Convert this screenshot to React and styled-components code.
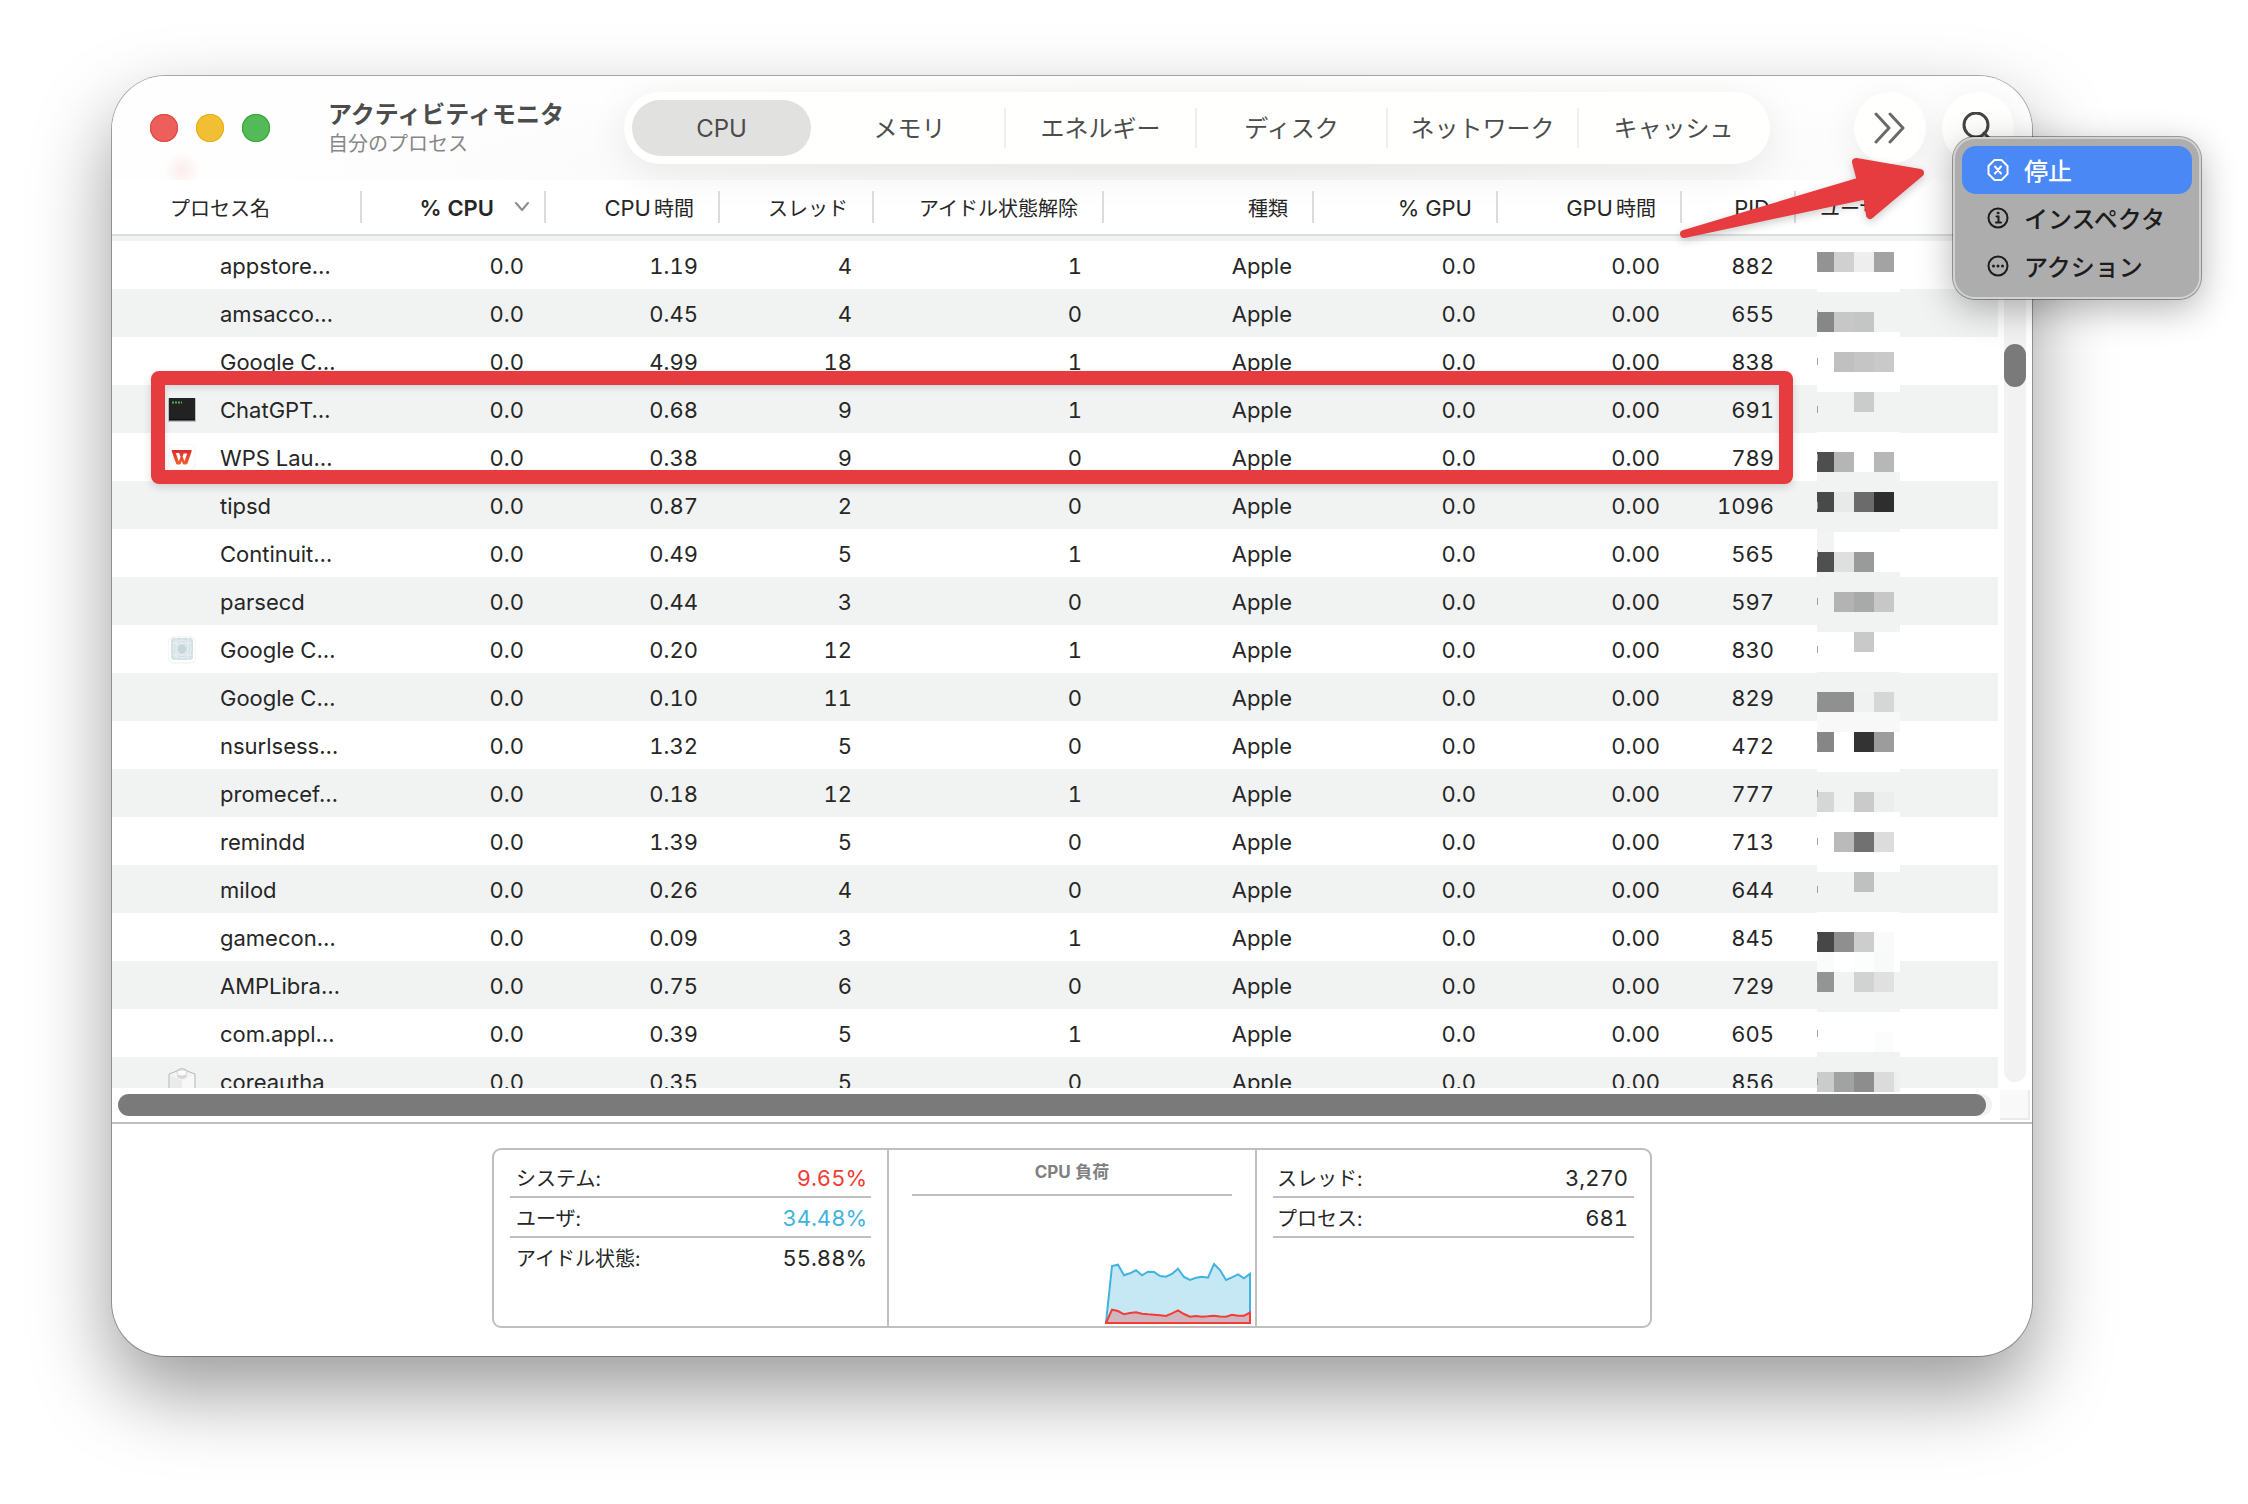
import styled, { createGlobalStyle } from 'styled-components';

const GlobalStyle = createGlobalStyle`
  * {
    box-sizing: border-box;
  }

  body {
    margin: 0;
    background: #ffffff;
    color: #262626;
    font-family: Inter, 'Noto Sans CJK JP', sans-serif;
    font-variant-numeric: tabular-nums;
  }

  button {
    font-family: inherit;
    color: inherit;
    border: none;
    background: none;
    padding: 0;
    cursor: pointer;
  }
`;

const Page = styled.div`
  padding: 76px 216px 148px 112px;
  overflow: hidden;
`;

const Window = styled.main`
  position: relative;
  border-radius: 54px;
  background: #ffffff;
  box-shadow: 0 0 0 1px rgba(0, 0, 0, 0.3), 0 36px 80px rgba(0, 0, 0, 0.4);
`;

const Toolbar = styled.header`
  display: flex;
  align-items: center;
  height: 104px;
  padding: 0 18px 0 38px;
`;

const TopArea = styled.div`
  border-radius: 54px 54px 0 0;
  background:
    radial-gradient(circle at 70px 94px, #fdecec, transparent 18px),
    radial-gradient(ellipse 900px 90px at 56% 90px, #f6f6f6, transparent),
    #fefefe;
`;

const Lights = styled.div`
  display: flex;
  gap: 18px;
  width: 178px;
`;

const Light = styled.button`
  width: 28px;
  height: 28px;
  border-radius: 50%;
  background: ${(props) => props.$color};
  box-shadow: inset 0 0 0 1px ${(props) => props.$edge};
`;

const Titles = styled.div`
  width: 296px;
  padding-top: 2px;
  white-space: nowrap;
`;

const Title = styled.h1`
  margin: 0;
  font-size: 24px;
  line-height: 30px;
  font-weight: 700;
  color: #4c4c4c;
`;

const Subtitle = styled.p`
  margin: 0;
  font-size: 20px;
  line-height: 28px;
  color: #878787;
`;

const Tabs = styled.nav`
  display: flex;
  align-items: center;
  flex: 0 1 1146px;
  height: 72px;
  border-radius: 36px;
  background: #fffffe;
  box-shadow: 0 8px 40px rgba(0, 0, 0, 0.08);
`;

const TabSlot = styled.div`
  flex: 0 0 calc(100% / 6);
  height: ${(props) => (props.$active ? '56px' : '40px')};
  padding: ${(props) => (props.$active ? '0 2px 0 8px' : '0')};
  border-right: 2px solid ${(props) => (props.$divider ? '#efefef' : 'transparent')};
`;

const Tab = styled.button`
  width: 100%;
  height: 100%;
  padding-top: 2px;
  border-radius: 28px;
  font-size: 24px;
  line-height: 32px;
  color: #4c4c4c;
  background: ${(props) => (props.$active ? '#e1e1e0' : 'transparent')};
`;

const ToolbarButtons = styled.div`
  display: flex;
  gap: 16px;
  margin-left: auto;
`;

const RoundButton = styled.button`
  display: flex;
  align-items: center;
  justify-content: center;
  width: 72px;
  height: 72px;
  border-radius: 50%;
  background: #fffffe;
  box-shadow: 0 8px 36px rgba(0, 0, 0, 0.07);
`;

const TableArea = styled.section`
  display: grid;
  grid-template-columns: 1fr 34px;
  position: relative;
`;

const TableClip = styled.div`
  height: 908px;
  overflow: hidden;
`;

const Table = styled.table`
  width: 100%;
  table-layout: fixed;
  border-collapse: separate;
  border-spacing: 0;
`;

const HeadCell = styled.th`
  height: 56px;
  padding: 0;
  border-bottom: 2px solid #dcdcdc;
  font-size: 20px;
  font-weight: ${(props) => (props.$sorted ? 600 : 400)};
  white-space: nowrap;
`;

const HeadLabel = styled.div`
  display: flex;
  align-items: center;
  justify-content: ${(props) => (props.$left ? 'flex-start' : 'flex-end')};
  height: 32px;
  padding: 0 ${(props) => (props.$sorted ? '14px' : '24px')} 0 ${(props) => props.$left || 0}px;
  border-right: 2px solid ${(props) => (props.$last ? 'transparent' : '#dcdcdc')};
  color: #262626;
`;

const Latin = styled.span`
  margin-right: ${(props) => (props.$gap ? '3px' : '0')};
  padding-top: 2px;
  font-size: 22px;
`;

const SortArrow = styled.svg`
  margin-left: 20px;
`;

const Row = styled.tr`
  background: ${(props) => (props.$striped ? '#f1f3f2' : '#ffffff')};
`;

const Sliver = styled.td`
  height: 5px;
  padding: 0;
`;

const Cell = styled.td`
  height: 48px;
  padding: 2px 22px 0 0;
  text-align: right;
  font-size: 22px;
  line-height: 28px;
  white-space: nowrap;
`;

const NameCell = styled(Cell)`
  padding: 2px 0 0 56px;
`;

const NameBox = styled.div`
  display: flex;
  align-items: center;
  gap: 24px;
`;

const IconSlot = styled.span`
  display: flex;
  width: 28px;
  height: 28px;
`;

const ScrollColumn = styled.div`
  display: flex;
  flex-direction: column;
  height: 908px;
`;

const ScrollHead = styled.div`
  height: 56px;
  border-bottom: 2px solid #dcdcdc;
`;

const VerticalTrack = styled.div`
  flex: 1;
  width: 22px;
  margin: 6px 6px;
  padding-top: 102px;
  border-radius: 11px;
  background: #f2f2f2;
`;

const VerticalThumb = styled.div`
  height: 43px;
  border-radius: 11px;
  background: #7a7a7a;
`;

const BottomScroll = styled.div`
  display: flex;
  justify-content: space-between;
  align-items: center;
  height: 36px;
  padding: 0 2px 0 6px;
  border-bottom: 2px solid #bfbfbf;
`;

const HorizontalTrack = styled.div`
  flex: 1;
  height: 22px;
  margin-right: 8px;
  padding-right: 6px;
  border-radius: 11px;
  background: #f2f2f2;
`;

const HorizontalThumb = styled.div`
  height: 22px;
  border-radius: 11px;
  background: #7a7a7a;
`;

const Corner = styled.div`
  width: 30px;
  height: 30px;
  border-right: 2px solid #ebebeb;
  border-bottom: 2px solid #ebebeb;
  background: #f9f9f9;
`;

const Footer = styled.footer`
  display: flex;
  justify-content: center;
  padding: 24px 0 28px;
`;

const Stats = styled.div`
  display: grid;
  grid-template-columns: 1fr 370px 1fr;
  height: 180px;
  border: 2px solid #bfbfbf;
  border-radius: 9px;
  width: 1160px;
`;

const StatList = styled.dl`
  margin: 0;
  padding: 8px 16px;
`;

const StatRow = styled.div`
  display: flex;
  justify-content: space-between;
  align-items: center;
  height: 40px;
  padding: ${(props) => props.$inset};
  border-bottom: 2px solid ${(props) => (props.$rule ? '#bfbfbf' : 'transparent')};
`;

const StatLabel = styled.dt`
  font-size: 20px;
`;

const StatValue = styled.dd`
  margin: 0;
  padding-top: 2px;
  font-size: 22px;
  color: ${(props) => props.$color || '#262626'};
`;

const LoadPanel = styled.div`
  display: flex;
  flex-direction: column;
  justify-content: space-between;
  border-left: 2px solid #bfbfbf;
  border-right: 2px solid #bfbfbf;
`;

const LoadTitle = styled.h2`
  height: 46px;
  margin: 0 23px;
  border-bottom: 2px solid #bfbfbf;
  font-size: 17px;
  line-height: 44px;
  font-weight: 700;
  text-align: center;
  color: #808080;
`;

const LoadChart = styled.svg`
  align-self: flex-end;
  margin: 0 4px 2px 0;
`;

const Mosaic = styled.svg`
  position: absolute;
  left: 1705px;
  top: 72px;
`;

const Highlight = styled.div`
  position: absolute;
  left: 39px;
  top: 191px;
  width: 1642px;
  height: 113px;
  border: 14px solid #e63c40;
  border-radius: 8px;
  box-shadow: 0 3px 8px rgba(0, 0, 0, 0.15), inset 0 3px 6px rgba(0, 0, 0, 0.12);
`;

const Arrow = styled.svg`
  position: absolute;
  right: 100px;
  top: 70px;
  filter: drop-shadow(0 3px 4px rgba(0, 0, 0, 0.2));
`;

const Menu = styled.div`
  position: absolute;
  right: -169px;
  top: 61px;
  width: 248px;
  padding: 9px;
  border-radius: 22px;
  background: #adadad;
  box-shadow:
    inset 0 0 0 2px #d2d2d2,
    0 0 0 1px rgba(0, 0, 0, 0.35),
    0 10px 36px rgba(0, 0, 0, 0.3);
`;

const MenuItem = styled.button`
  display: flex;
  align-items: center;
  gap: 14px;
  width: 100%;
  height: 48px;
  padding: 0 0 0 24px;
  border-radius: 14px;
  font-size: 24px;
  font-weight: 500;
  white-space: nowrap;
  color: ${(props) => (props.$active ? '#ffffff' : '#1c1c1c')};
  background: ${(props) => (props.$active ? '#4a88f6' : 'transparent')};
`;

const MenuLabel = styled.span`
  padding-bottom: 2px;
`;

const tabs = ['CPU', 'メモリ', 'エネルギー', 'ディスク', 'ネットワーク', 'キャッシュ'];

const columns = [
  { label: 'プロセス名', width: 250, left: 58 },
  { latin: '% CPU', width: 184, sorted: true },
  { latin: 'CPU', label: '時間', width: 174 },
  { label: 'スレッド', width: 154 },
  { label: 'アイドル状態解除', width: 230 },
  { label: '種類', width: 210 },
  { latin: '% GPU', width: 184 },
  { latin: 'GPU', label: '時間', width: 184 },
  { latin: 'PID', width: 114 },
  { label: 'ユーザ', left: 24 },
];

const processes = [
  ['appstore…', '1.19', 4, 1, 882],
  ['amsacco…', '0.45', 4, 0, 655],
  ['Google C…', '4.99', 18, 1, 838],
  ['ChatGPT…', '0.68', 9, 1, 691, 'terminal'],
  ['WPS Lau…', '0.38', 9, 0, 789, 'wps'],
  ['tipsd', '0.87', 2, 0, 1096],
  ['Continuit…', '0.49', 5, 1, 565],
  ['parsecd', '0.44', 3, 0, 597],
  ['Google C…', '0.20', 12, 1, 830, 'generic'],
  ['Google C…', '0.10', 11, 0, 829],
  ['nsurlsess…', '1.32', 5, 0, 472],
  ['promecef…', '0.18', 12, 1, 777],
  ['remindd', '1.39', 5, 0, 713],
  ['milod', '0.26', 4, 0, 644],
  ['gamecon…', '0.09', 3, 1, 845],
  ['AMPLibra…', '0.75', 6, 0, 729],
  ['com.appl…', '0.39', 5, 1, 605],
  ['coreautha', '0.35', 5, 0, 856, 'brick'],
];

// w and g are the two row backgrounds
const w = '#ffffff';
const g = '#f1f3f2';
const mosaicColumns = [[0, 17], [17, 20], [37, 20], [57, 20], [77, 6]];
const mosaicRows = [
  ['#939393', '#d0d0d0', '#eeeeee', '#a3a3a3', w],
  [w, w, w, w, w],
  [g, g, g, g, g],
  ['#878787', '#c7c7c7', '#c4c6c5', g, g],
  [w, w, w, w, w],
  [w, '#c0c0c0', '#c5c5c5', '#c9c9c9', w],
  [w, w, w, w, w],
  [g, g, '#cacccb', g, g],
  [g, g, g, g, g],
  [w, w, w, w, w],
  ['#4e4e4e', '#b5b5b5', w, '#b7b7b7', w],
  [g, g, g, g, g],
  ['#494949', '#e8eae9', '#6b6b6b', '#2e2e2e', g],
  [g, g, g, g, g],
  ['#f3f3f3', w, w, w, w],
  ['#4f4f4f', '#dfdfdf', '#9a9a9a', w, w],
  [g, g, g, g, g],
  [g, '#b3b3b3', '#a8aaa9', '#c6c7c6', g],
  [g, g, g, g, g],
  [w, w, '#c9c9c9', w, w],
  [w, w, w, w, w],
  [g, g, g, g, g],
  ['#909090', '#909090', '#f0f2f1', '#d5d7d6', g],
  ['#f8f8f8', '#f8f8f8', '#f8f8f8', '#f8f8f8', '#f8f8f8'],
  ['#868686', w, '#333333', '#9c9c9c', w],
  [w, w, w, w, w],
  [g, g, g, g, g],
  ['#d5d7d6', g, '#cacaca', '#eceded', g],
  [w, w, w, w, w],
  [w, '#bababa', '#717171', '#dcdcdc', w],
  [w, w, w, w, w],
  [g, g, '#bfc1c0', g, g],
  [g, g, g, g, g],
  [w, w, w, w, w],
  ['#474747', '#8f8f8f', '#cdcdcd', '#fafafa', w],
  ['#f9fcfb', w, '#fcfefd', '#f8faf9', w],
  ['#949494', g, '#d1d3d2', '#dfe0df', g],
  [g, g, g, g, g],
  [w, w, w, w, w],
  [w, w, w, '#fcfcfc', w],
  [g, g, g, g, g],
  ['#cacccb', '#a1a3a2', '#8d8d8d', '#dadbda', '#eef0ef'],
];

const userLoad =
  '1,60.5 7,4 13,2.7 19,13.3 25,11.3 31,8.3 37,13.3 43,9.7 49,10 55,14 61,14.7 67,12 73,6.7 79,15 85,18 91,15.7 97,14.7 103,15.7 109,2 115,8 121,18 127,15.3 133,12.3 139,16.3 145,11.7 145,61';
const systemLoad =
  '1,61 7,47.7 13,49 19,52.3 25,51 31,50.3 37,51.7 43,52.3 49,52.7 55,53.3 61,54 67,51.3 73,48.3 79,52 85,54.7 91,54 97,54.7 103,54.3 109,53.7 115,54.5 121,54.7 127,52.7 133,53.7 139,53.7 145,50.7 145,61';

function TerminalIcon() {
  return (
    <svg width="28" height="28" viewBox="0 0 28 28">
      <rect x="0" y="2" width="28" height="24" rx="1" fill="#b9c0c4" />
      <rect x="1" y="2" width="26" height="22" fill="#222222" />
      <path d="M1 24h26" stroke="#000000" />
      <path d="M4 6.500h2M7 6.500h2M10 6.500h2M13 6.500h1" stroke="#4fae55" strokeWidth="2" />
    </svg>
  );
}

function WpsIcon() {
  return (
    <svg width="28" height="28" viewBox="0 0 28 28">
      <defs>
        <linearGradient id="wps" x1="0" y1="0" x2="0" y2="1">
          <stop offset="0" stopColor="#dc2b2c" />
          <stop offset="1" stopColor="#f4602f" />
        </linearGradient>
      </defs>
      <rect x="1" y="0" width="26" height="26" rx="6" fill="#ffffff" stroke="#f3f3f3" />
      <path
        fill="url(#wps)"
        fillRule="evenodd"
        d="M4.500 6H23q1 0 .7 1L19.500 19.500q-.5 1-1.500 1h-2q-1 0-1.300-1L13.800 17l-1 2.500q-.4 1-1.400 1h-2q-1 0-1.400-1L3.700 7.200Q3.400 6 4.500 6zM7.800 9l3 8.500 1.800-4.500L11.200 9zM15.600 9.500l-1 3 1.900 4.800 2.700-7.800z"
      />
    </svg>
  );
}

function GenericIcon() {
  return (
    <svg width="28" height="28" viewBox="0 0 28 28">
      <rect x="0" y="1" width="28" height="26" rx="6" fill="#ffffff" stroke="#ededed" />
      <rect x="3" y="2" width="22" height="22" rx="3" fill="#d3dfe4" />
      <g fill="none" stroke="#eaf1f3">
        <path d="M3 7h22M3 19h22M8 2v22M20 2v22" />
        <path d="M4 3l20 20M24 3L4 23" strokeWidth="0.6" />
        <circle cx="14" cy="13" r="9" />
        <circle cx="14" cy="13" r="6" />
      </g>
      <circle cx="14" cy="13" r="4" fill="#c5d6de" />
    </svg>
  );
}

function BrickIcon() {
  return (
    <svg width="28" height="28" viewBox="0 0 28 28">
      <path d="M1 6l8-3c2-3 8-3 10 0l8 3v14l-13 7-13-7z" fill="#f4f4f4" stroke="#b5b5b5" />
      <path d="M2 7l12 6v13L2 20z" fill="#ebebeb" />
      <path d="M26 7l-12 6v13l12-6z" fill="#f8f8f8" />
      <ellipse cx="14" cy="8" rx="5" ry="3" fill="#d9d9d9" />
      <ellipse cx="14" cy="5" rx="5" ry="3" fill="#fbfbfb" stroke="#cfcfcf" strokeWidth="0.8" />
    </svg>
  );
}

const processIcons = {
  terminal: <TerminalIcon />,
  wps: <WpsIcon />,
  generic: <GenericIcon />,
  brick: <BrickIcon />,
};

function StopIcon() {
  return (
    <svg width="24" height="24" viewBox="0 0 24 24" fill="none" stroke="currentColor" strokeWidth="2" strokeLinejoin="round" strokeLinecap="round">
      <path d="M8.500 2h7l6 6v8l-6 6h-7l-6-6V8z" />
      <path d="M9 8.500l6 7M15 8.500l-6 7" />
    </svg>
  );
}

function InfoIcon() {
  return (
    <svg width="24" height="24" viewBox="0 0 24 24" fill="none" stroke="currentColor" strokeWidth="2" strokeLinecap="round">
      <circle cx="12" cy="12" r="9.500" />
      <path d="M10.500 10.500H12.500V16M10 16.500h5" />
      <circle cx="12" cy="7" r="1" fill="currentColor" strokeWidth="1" />
    </svg>
  );
}

function MoreIcon() {
  return (
    <svg width="24" height="24" viewBox="0 0 24 24" fill="none" stroke="currentColor" strokeWidth="2">
      <circle cx="12" cy="12" r="9.500" />
      <g fill="currentColor" stroke="none">
        <circle cx="7.500" cy="12" r="1.500" />
        <circle cx="12" cy="12" r="1.500" />
        <circle cx="16.500" cy="12" r="1.500" />
      </g>
    </svg>
  );
}

function UserMosaic() {
  return (
    <Mosaic width="83" height="840" shapeRendering="crispEdges" aria-hidden="true">
      {mosaicRows.map((row, y) =>
        row.map((fill, x) => (
          <rect
            key={`${y}-${x}`}
            x={mosaicColumns[x][0]}
            y={y * 20}
            width={mosaicColumns[x][1]}
            height="20"
            fill={fill}
          />
        ))
      )}
      {processes.map((process, i) => (
        <rect key={i} x="0" y={i * 48 + 10} width="1" height="7" fill="#a0a0a0" />
      ))}
    </Mosaic>
  );
}

function ProcessTable() {
  return (
    <Table>
      <colgroup>
        {columns.map((column, i) => (
          <col key={i} width={column.width} />
        ))}
      </colgroup>
      <thead>
        <tr>
          {columns.map((column, i) => (
            <HeadCell key={i} scope="col" $sorted={column.sorted}>
              <HeadLabel
                $left={column.left}
                $sorted={column.sorted}
                $last={i === columns.length - 1}
              >
                {column.latin && <Latin $gap={column.label}>{column.latin}</Latin>}
                {column.label}
                {column.sorted && (
                  <SortArrow width="16" height="10" viewBox="0 0 16 10" fill="none" stroke="#8c8c8c" strokeWidth="2" strokeLinecap="round" strokeLinejoin="round">
                    <path d="M2 1l6 7 6-7" />
                  </SortArrow>
                )}
              </HeadLabel>
            </HeadCell>
          ))}
        </tr>
      </thead>
      <tbody>
        <Row $striped>
          <Sliver colSpan={columns.length} />
        </Row>
        {processes.map(([name, time, threads, wakeups, pid, icon], i) => (
          <Row key={pid} $striped={i % 2 === 1}>
            <NameCell>
              <NameBox>
                <IconSlot>{processIcons[icon]}</IconSlot>
                {name}
              </NameBox>
            </NameCell>
            <Cell>0.0</Cell>
            <Cell>{time}</Cell>
            <Cell>{threads}</Cell>
            <Cell>{wakeups}</Cell>
            <Cell>Apple</Cell>
            <Cell>0.0</Cell>
            <Cell>0.00</Cell>
            <Cell>{pid}</Cell>
            <Cell />
          </Row>
        ))}
      </tbody>
    </Table>
  );
}

function StatsPanel() {
  return (
    <Stats>
      <StatList>
        <StatRow $rule $inset="0 4px 0 6px">
          <StatLabel>システム:</StatLabel>
          <StatValue $color="#f23c36">9.65%</StatValue>
        </StatRow>
        <StatRow $rule $inset="0 4px 0 6px">
          <StatLabel>ユーザ:</StatLabel>
          <StatValue $color="#42b3e0">34.48%</StatValue>
        </StatRow>
        <StatRow $inset="0 4px 0 6px">
          <StatLabel>アイドル状態:</StatLabel>
          <StatValue>55.88%</StatValue>
        </StatRow>
      </StatList>
      <LoadPanel>
        <LoadTitle>CPU 負荷</LoadTitle>
        <LoadChart width="146" height="62" viewBox="0 0 146 62" strokeWidth="2">
          <polygon points={userLoad} fill="#c6e8f5" stroke="#42b3e0" />
          <polygon points={systemLoad} fill="#d2b6bf" stroke="#f23c36" />
        </LoadChart>
      </LoadPanel>
      <StatList>
        <StatRow $rule $inset="0 6px 0 4px">
          <StatLabel>スレッド:</StatLabel>
          <StatValue>3,270</StatValue>
        </StatRow>
        <StatRow $rule $inset="0 6px 0 4px">
          <StatLabel>プロセス:</StatLabel>
          <StatValue>681</StatValue>
        </StatRow>
      </StatList>
    </Stats>
  );
}

export default function App() {
  return (
    <Page>
      <GlobalStyle />
      <Window>
        <TopArea>
          <Toolbar>
            <Lights>
              <Light $color="#ed5f5b" $edge="#e2463f" aria-label="閉じる" />
              <Light $color="#f1bf34" $edge="#e8ae14" aria-label="しまう" />
              <Light $color="#54ba58" $edge="#2fa537" aria-label="拡大" />
            </Lights>
            <Titles>
              <Title>アクティビティモニタ</Title>
              <Subtitle>自分のプロセス</Subtitle>
            </Titles>
            <Tabs>
              {tabs.map((tab, i) => (
                <TabSlot key={tab} $active={i === 0} $divider={i > 0 && i < tabs.length - 1}>
                  <Tab $active={i === 0}>{tab}</Tab>
                </TabSlot>
              ))}
            </Tabs>
            <ToolbarButtons>
              <RoundButton aria-label="さらに表示">
                <svg width="36" height="32" viewBox="0 0 36 32" fill="none" stroke="#6a6a6a" strokeWidth="3" strokeLinecap="round" strokeLinejoin="round">
                  <path d="M4 2l13 14L4 30M18 2l13 14-13 14" />
                </svg>
              </RoundButton>
              <RoundButton aria-label="検索">
                <svg width="32" height="32" viewBox="0 0 32 32" fill="none" stroke="#454545" strokeWidth="3" strokeLinecap="round">
                  <circle cx="14" cy="13" r="12" />
                  <path d="M22 21l8 8" />
                </svg>
              </RoundButton>
            </ToolbarButtons>
          </Toolbar>
        </TopArea>
        <TableArea>
          <TableClip>
            <ProcessTable />
          </TableClip>
          <ScrollColumn>
            <ScrollHead />
            <VerticalTrack>
              <VerticalThumb />
            </VerticalTrack>
          </ScrollColumn>
          <UserMosaic />
          <Highlight />
        </TableArea>
        <BottomScroll>
          <HorizontalTrack>
            <HorizontalThumb />
          </HorizontalTrack>
          <Corner />
        </BottomScroll>
        <Footer>
          <StatsPanel />
        </Footer>
        <Arrow width="260" height="100" viewBox="0 0 260 100">
          <path
            d="M12 88L189 35l-5-19 64 11-50 42-3-20z"
            fill="#e63c40"
            stroke="#e63c40"
            strokeWidth="8"
            strokeLinejoin="round"
          />
        </Arrow>
        <Menu role="menu">
          <MenuItem role="menuitem" $active>
            <StopIcon />
            <MenuLabel>停止</MenuLabel>
          </MenuItem>
          <MenuItem role="menuitem">
            <InfoIcon />
            <MenuLabel>インスペクタ</MenuLabel>
          </MenuItem>
          <MenuItem role="menuitem">
            <MoreIcon />
            <MenuLabel>アクション</MenuLabel>
          </MenuItem>
        </Menu>
      </Window>
    </Page>
  );
}
